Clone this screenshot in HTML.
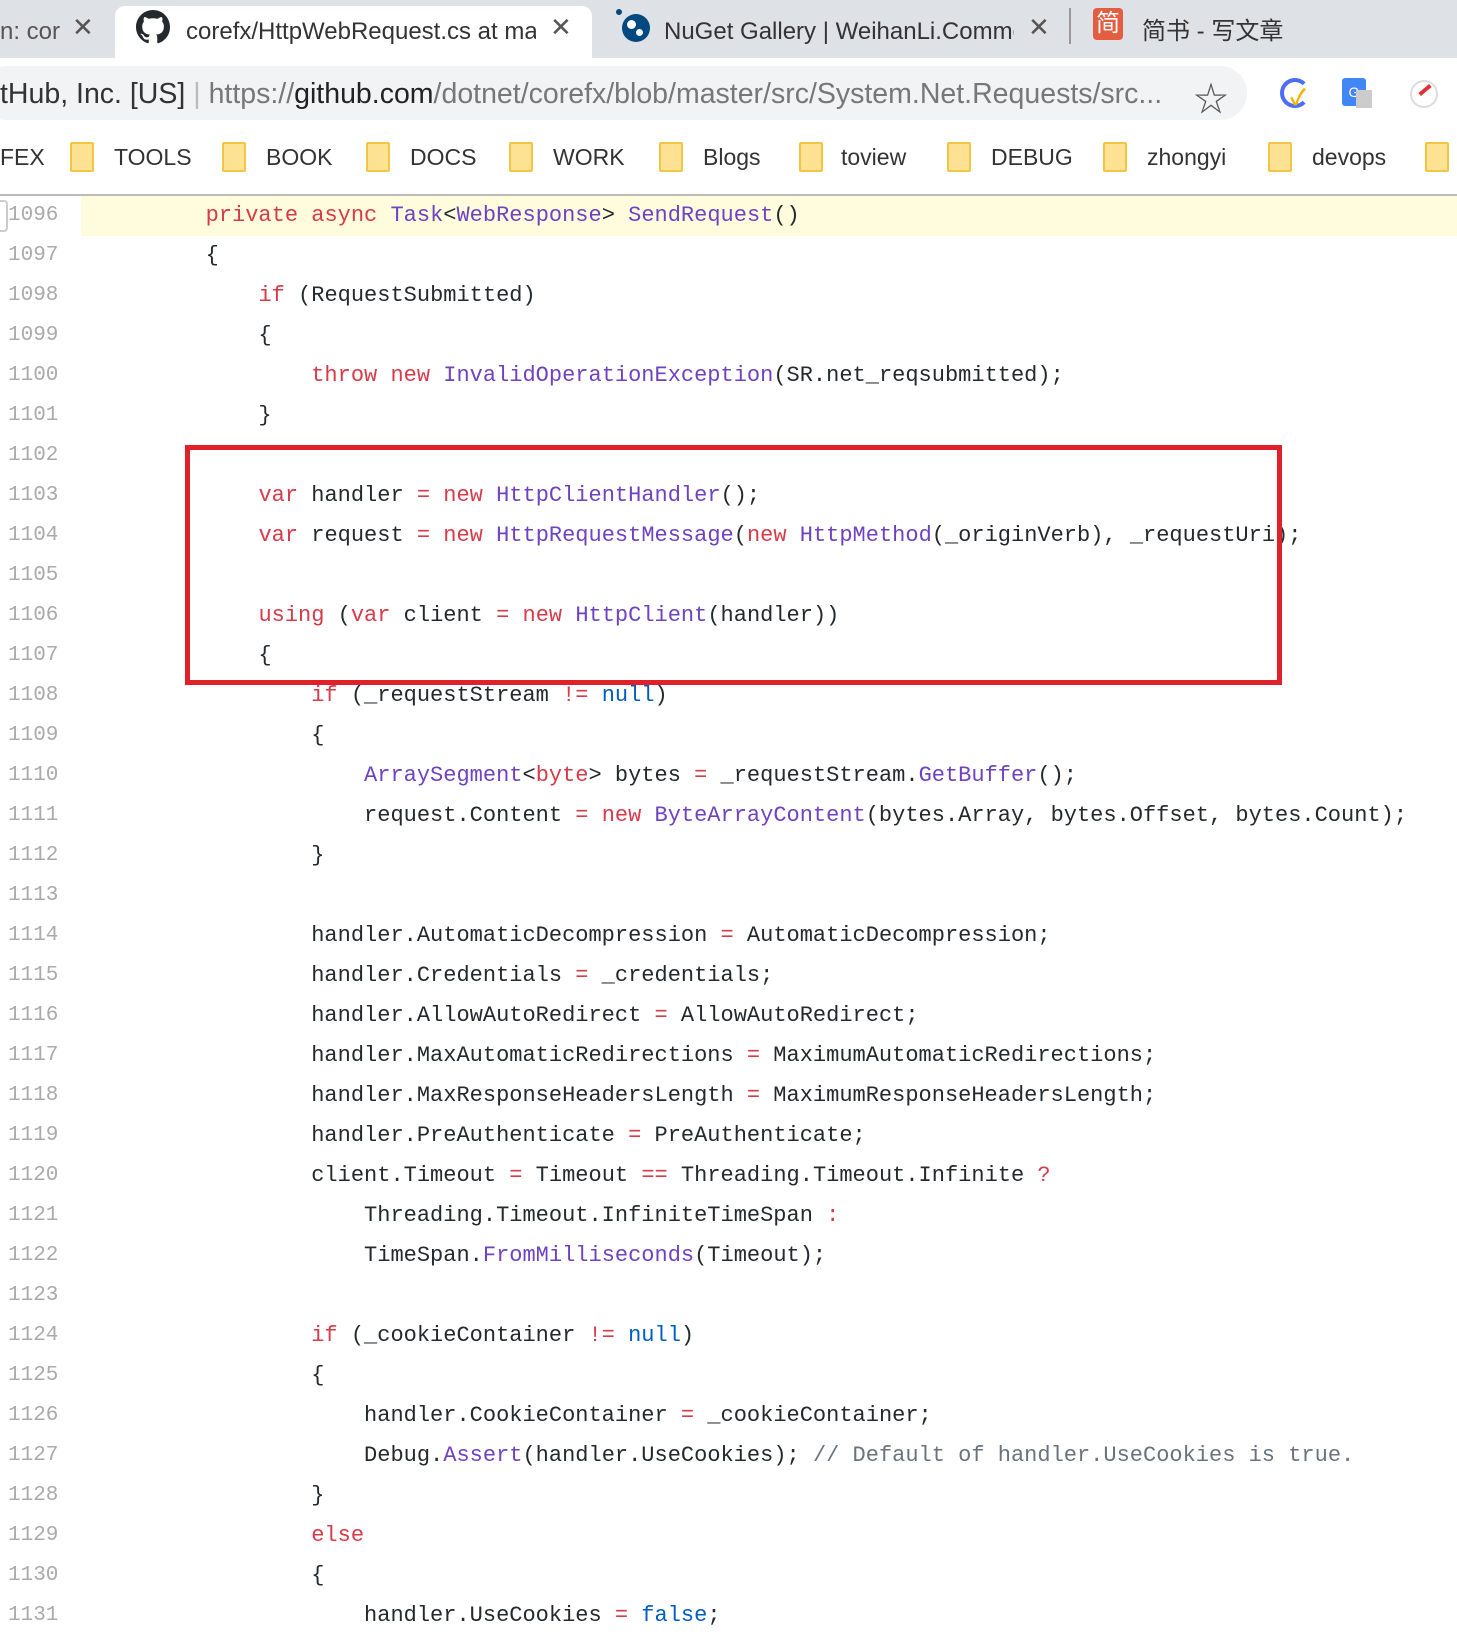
<!DOCTYPE html>
<html><head><meta charset="utf-8"><style>
*{margin:0;padding:0;box-sizing:border-box}
body{width:1457px;height:1644px;overflow:hidden;background:#fff;position:relative;font-family:"Liberation Sans","Noto Sans CJK SC",sans-serif;color:#3c4043}
.abs{position:absolute}
.tabbar{left:0;top:0;width:1457px;height:58px;background:#dee1e6}
.tab{top:8px;height:50px;font-size:24px;line-height:48px;white-space:nowrap;overflow:hidden}
.x{font-size:26px;color:#555}
.omni{left:-20px;top:66px;width:1267px;height:54px;background:#f1f3f4;border-radius:27px}
.bm{top:140px;font-size:23px;color:#333;line-height:34px}
.fold{top:142px;width:24px;height:30px;background:#fde293;border:2px solid #f4c542;border-radius:2px}
.sep{left:0;top:194px;width:1457px;height:2px;background:#bbb}
.ln{left:8px;width:60px;font-family:"Liberation Mono",monospace;font-size:21px;color:#aaa;line-height:40px}
.code{left:100px;font-family:"Liberation Mono",monospace;font-size:22px;color:#24292e;line-height:40px;white-space:pre}
.k{color:#d73a49}.t{color:#6f42c1}.b{color:#005cc5}.c{color:#6a737d}
</style></head><body>
<div class="abs tabbar"></div>
<div class="abs tab" style="left:0;width:60px;color:#555">n: cor</div>
<div class="abs x" style="left:72px;top:12px">✕</div>
<div class="abs" style="left:115px;top:6px;width:477px;height:52px;background:#fff;border-radius:10px 10px 0 0"></div>
<svg class="abs" style="left:136px;top:10px" width="34" height="34" viewBox="0 0 16 16"><path fill="#24292e" d="M8 0C3.58 0 0 3.58 0 8c0 3.54 2.290 6.53 5.47 7.59.4.07.55-.17.55-.38v-1.33c-2.23.48-2.7-1.07-2.7-1.070-.36-.92-.89-1.17-.89-1.17-.73-.5.06-.49.06-.49.8.06 1.23.83 1.23.83.72 1.22 1.87.87 2.33.66.07-.52.28-.87.51-1.07-1.78-.2-3.64-.89-3.64-3.95 0-.87.31-1.59.82-2.15-.08-.2-.36-1.02.08-2.12 0 0 .67-.21 2.2.82a7.6 7.6 0 0 1 4 0c1.53-1.04 2.2-.82 2.2-.82.44 1.1.16 1.92.08 2.12.51.56.82 1.27.82 2.15 0 3.07-1.87 3.75-3.65 3.950.29.25.54.73.54 1.48v2.2c0 .21.15.46.55.38A8.01 8.01 0 0 0 16 8c0-4.420-3.58-8-8-8z"/></svg>
<div class="abs tab" style="left:186px;width:350px;color:#333">corefx/HttpWebRequest.cs at ma</div>
<div class="abs x" style="left:550px;top:12px">✕</div>
<div class="abs" style="left:622px;top:14px;width:28px;height:28px;border-radius:50%;background:#004880"></div>
<div class="abs" style="left:627px;top:20px;width:9px;height:9px;border-radius:50%;background:#fff"></div>
<div class="abs" style="left:636px;top:29px;width:7px;height:7px;border-radius:50%;background:#fff"></div>
<div class="abs" style="left:616px;top:9px;width:6px;height:6px;border-radius:50%;background:#004880"></div>
<div class="abs tab" style="left:664px;width:350px;color:#333">NuGet Gallery | WeihanLi.Commo</div>
<div class="abs x" style="left:1028px;top:12px">✕</div>
<div class="abs" style="left:1069px;top:8px;width:2px;height:36px;background:#999"></div>
<div class="abs" style="left:1093px;top:8px;width:30px;height:32px;background:#e35d40;border-radius:4px;color:#fff;font-size:24px;line-height:32px;text-align:center">简</div>
<div class="abs tab" style="left:1142px;width:200px;color:#333">简书 - 写文章</div>
<div class="abs omni"></div>
<div class="abs" style="left:0;top:76px;font-size:28.5px;color:#333;line-height:36px;white-space:nowrap">tHub, Inc. [US] <span style="color:#bbb">|</span> <span style="color:#777">https://</span><span style="color:#222">github.com</span><span style="color:#777">/dotnet/corefx/blob/master/src/System.Net.Requests/src...</span></div>
<div class="abs" style="left:1194px;top:72px;font-size:34px;color:#555">☆</div>
<div class="abs" style="left:1280px;top:78px;width:30px;height:30px;border-radius:50%;border:4px solid #4c6ef5;border-right-color:#fff"></div>
<div class="abs" style="left:1290px;top:80px;color:#f5b400;font-size:22px;font-weight:bold">✓</div>
<div class="abs" style="left:1342px;top:78px;width:24px;height:28px;background:#4285f4;border-radius:3px;color:#fff;font-size:14px;text-align:center;line-height:28px">G</div>
<div class="abs" style="left:1356px;top:90px;width:16px;height:18px;background:#ccc"></div>
<div class="abs" style="left:1410px;top:80px;width:28px;height:28px;border-radius:50%;border:2px solid #ddd"></div>
<div class="abs" style="left:1418px;top:88px;width:14px;height:4px;background:#d33;transform:rotate(-40deg)"></div>
<div class="abs bm" style="left:0">FEX</div>
<div class="abs fold" style="left:70px"></div><div class="abs bm" style="left:114px">TOOLS</div>
<div class="abs fold" style="left:222px"></div><div class="abs bm" style="left:266px">BOOK</div>
<div class="abs fold" style="left:366px"></div><div class="abs bm" style="left:410px">DOCS</div>
<div class="abs fold" style="left:509px"></div><div class="abs bm" style="left:553px">WORK</div>
<div class="abs fold" style="left:659px"></div><div class="abs bm" style="left:703px">Blogs</div>
<div class="abs fold" style="left:799px"></div><div class="abs bm" style="left:841px">toview</div>
<div class="abs fold" style="left:947px"></div><div class="abs bm" style="left:991px">DEBUG</div>
<div class="abs fold" style="left:1103px"></div><div class="abs bm" style="left:1147px">zhongyi</div>
<div class="abs fold" style="left:1268px"></div><div class="abs bm" style="left:1312px">devops</div>
<div class="abs fold" style="left:1425px"></div>
<div class="abs sep"></div>
<div class="abs" style="left:81px;top:196px;width:1376px;height:40px;background:#fffbdd"></div>
<div class="abs" style="left:0;top:200px;width:8px;height:32px;border:2px solid #ccc;border-left:none;border-radius:0 4px 4px 0"></div>
<div class="abs ln" style="top:196px">1096<br>1097<br>1098<br>1099<br>1100<br>1101<br>1102<br>1103<br>1104<br>1105<br>1106<br>1107<br>1108<br>1109<br>1110<br>1111<br>1112<br>1113<br>1114<br>1115<br>1116<br>1117<br>1118<br>1119<br>1120<br>1121<br>1122<br>1123<br>1124<br>1125<br>1126<br>1127<br>1128<br>1129<br>1130<br>1131</div>
<div class="abs code" style="top:196px">        <span class="k">private async</span> <span class="t">Task</span>&lt;<span class="t">WebResponse</span>&gt; <span class="t">SendRequest</span>()
        {
            <span class="k">if</span> (RequestSubmitted)
            {
                <span class="k">throw new</span> <span class="t">InvalidOperationException</span>(SR.net_reqsubmitted);
            }

            <span class="k">var</span> handler <span class="k">=</span> <span class="k">new</span> <span class="t">HttpClientHandler</span>();
            <span class="k">var</span> request <span class="k">=</span> <span class="k">new</span> <span class="t">HttpRequestMessage</span>(<span class="k">new</span> <span class="t">HttpMethod</span>(_originVerb), _requestUri);

            <span class="k">using</span> (<span class="k">var</span> client <span class="k">=</span> <span class="k">new</span> <span class="t">HttpClient</span>(handler))
            {
                <span class="k">if</span> (_requestStream <span class="k">!=</span> <span class="b">null</span>)
                {
                    <span class="t">ArraySegment</span>&lt;<span class="k">byte</span>&gt; bytes <span class="k">=</span> _requestStream.<span class="t">GetBuffer</span>();
                    request.Content <span class="k">=</span> <span class="k">new</span> <span class="t">ByteArrayContent</span>(bytes.Array, bytes.Offset, bytes.Count);
                }

                handler.AutomaticDecompression <span class="k">=</span> AutomaticDecompression;
                handler.Credentials <span class="k">=</span> _credentials;
                handler.AllowAutoRedirect <span class="k">=</span> AllowAutoRedirect;
                handler.MaxAutomaticRedirections <span class="k">=</span> MaximumAutomaticRedirections;
                handler.MaxResponseHeadersLength <span class="k">=</span> MaximumResponseHeadersLength;
                handler.PreAuthenticate <span class="k">=</span> PreAuthenticate;
                client.Timeout <span class="k">=</span> Timeout <span class="k">==</span> Threading.Timeout.Infinite <span class="k">?</span>
                    Threading.Timeout.InfiniteTimeSpan <span class="k">:</span>
                    TimeSpan.<span class="t">FromMilliseconds</span>(Timeout);

                <span class="k">if</span> (_cookieContainer <span class="k">!=</span> <span class="b">null</span>)
                {
                    handler.CookieContainer <span class="k">=</span> _cookieContainer;
                    Debug.<span class="t">Assert</span>(handler.UseCookies); <span class="c">// Default of handler.UseCookies is true.</span>
                }
                <span class="k">else</span>
                {
                    handler.UseCookies <span class="k">=</span> <span class="b">false</span>;
</div>
<div class="abs" style="left:185px;top:445px;width:1097px;height:240px;border:5px solid #e0202a"></div>
</body></html>
